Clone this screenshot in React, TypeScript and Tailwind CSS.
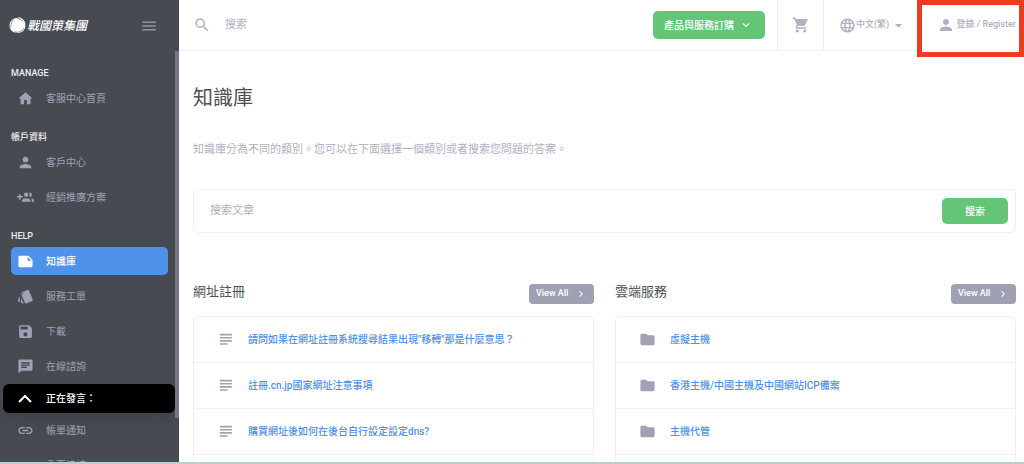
import { FC, ReactNode } from 'react'
import { IconType } from 'react-icons'
import {
  MdArrowDropDown,
  MdChat,
  MdFolder,
  MdHome,
  MdKeyboardArrowDown,
  MdKeyboardArrowRight,
  MdLanguage,
  MdLink,
  MdMenu,
  MdNote,
  MdPerson,
  MdSave,
  MdSearch,
  MdShoppingCart,
  MdStyle,
} from 'react-icons/md'

const GroupAddIcon: IconType = ({ className }) => (
  <svg viewBox="0 0 24 24" fill="currentColor" className={className} aria-hidden="true">
    <path d="M8 10H5V7H3v3H0v2h3v3h2v-3h3v-2zm10 1c1.66 0 2.99-1.34 2.99-3S19.66 5 18 5c-.32 0-.63.05-.91.14.57.81.9 1.79.9 2.86s-.34 2.04-.9 2.86c.28.09.59.14.91.14zm-5 0c1.66 0 2.99-1.34 2.99-3S14.66 5 13 5c-1.66 0-3 1.34-3 3s1.34 3 3 3zm6.62 2.16c.83.73 1.38 1.66 1.38 2.84v2h3v-2c0-1.54-2.37-2.49-4.38-2.84zM13 13c-2 0-6 1-6 3v2h12v-2c0-2-4-3-6-3z" />
  </svg>
)

const ArticleIcon: IconType = ({ className }) => (
  <svg viewBox="0 0 24 24" fill="currentColor" className={className} aria-hidden="true">
    <path d="M4 4h17v2.2H4zM4 8.4h17v2.2H4zM4 12.8h17V15H4zM4 17.2h11v2.2H4z" />
  </svg>
)

const Logo: FC = () => (
  <a href="#" className="flex items-center gap-px text-white">
    <svg viewBox="0 0 34 34" className="size-[17px]" aria-hidden="true">
      <path
        d="M15 2C7 3 1 9 1 17c0 9 7 15 16 15 8 0 15-5 16-14C33 9 27 2 19 2c4 2 8 4 10 9-4-5-8-7-14-9z"
        fill="currentColor"
      />
      <path
        d="M9 6c-4 4-6 8-5 14M11 30c8 2 15-1 18-7"
        fill="none"
        stroke="#474a51"
        strokeWidth="1.2"
        strokeLinecap="round"
      />
      <path d="M18 1c7 1 13 5 14 12" fill="none" stroke="currentColor" strokeWidth="1.5" />
    </svg>
    <span className="text-[12px] leading-4 font-medium italic">戰國策集團</span>
  </a>
)

type NavItemProps = { icon: IconType; label: string; active?: boolean }

const NavItem: FC<NavItemProps> = ({ icon: Icon, label, active }) => (
  <a
    href="#"
    className={`flex h-7 items-center gap-[7px] rounded-[5px] ${
      active ? 'bg-[#4f92eb] font-medium text-white' : 'text-[#a0a1b5]'
    }`}
  >
    <span className="flex w-7 justify-center">
      <Icon className="size-[17px]" />
    </span>
    {label}
  </a>
)

const NavSection: FC<{ title: string; children: ReactNode }> = ({ title, children }) => (
  <section>
    <h2 className="mb-[3px] text-[9px] leading-4 font-medium text-[#eeeef2]">{title}</h2>
    <div className="flex flex-col gap-[7px]">{children}</div>
  </section>
)

const Sidebar: FC = () => (
  <aside className="relative w-[179px] shrink-0 overflow-hidden bg-[#474a51]">
    <div className="flex h-[51px] items-center justify-between pr-[21px] pl-[9px]">
      <Logo />
      <button type="button" aria-label="Menu" className="text-[#9192a1]">
        <MdMenu className="size-[18px]" />
      </button>
    </div>
    <nav className="flex flex-col gap-[17px] px-[11px] pt-[14px] text-[10px]">
      <NavSection title="MANAGE">
        <NavItem icon={MdHome} label="客服中心首頁" />
      </NavSection>
      <NavSection title="帳戶資料">
        <NavItem icon={MdPerson} label="客戶中心" />
        <NavItem icon={GroupAddIcon} label="經銷推廣方案" />
      </NavSection>
      <NavSection title="HELP">
        <NavItem icon={MdNote} label="知識庫" active />
        <NavItem icon={MdStyle} label="服務工單" />
        <NavItem icon={MdSave} label="下載" />
        <NavItem icon={MdChat} label="在線諮詢" />
      </NavSection>
    </nav>
    <button
      type="button"
      className="mt-1 ml-[3px] flex h-[29px] w-[172px] items-center gap-[7px] rounded-[6px] bg-black pl-2 text-[10px] font-medium text-white shadow-lg"
    >
      <span className="flex w-7 justify-center">
        <svg viewBox="0 0 14 8" className="w-[14px]" fill="none" stroke="currentColor" strokeWidth="2" aria-hidden="true">
          <path d="M1 7l6-6 6 6" />
        </svg>
      </span>
      正在發言：
    </button>
    <div className="mt-[3px] flex flex-col gap-[7px] px-[11px] text-[10px]">
      <NavItem icon={MdLink} label="帳單通知" />
      <NavItem icon={MdLink} label="重要連結" />
    </div>
    <div className="absolute top-[51px] right-0 h-[367px] w-1 bg-[#737682]" />
  </aside>
)

const Header: FC = () => (
  <header className="relative flex h-[51px] items-stretch border-b border-[#efeff2] pl-[14px] text-[#afb0c0]">
    <label className="flex grow items-center gap-[14px]">
      <MdSearch className="size-[18px] shrink-0" />
      <input
        type="search"
        aria-label="搜索"
        placeholder="搜索"
        className="w-full text-[11px] outline-none placeholder:text-[#afb0c0]"
      />
    </label>
    <div className="flex items-center border-r border-[#efeff2] pr-3">
      <button
        type="button"
        className="flex h-7 w-28 items-center justify-between rounded-[5px] bg-[#64c576] pr-3 pl-[11px] text-[10px] font-medium text-white"
      >
        產品與服務訂購
        <MdKeyboardArrowDown className="size-[14px]" />
      </button>
    </div>
    <a href="#" aria-label="Cart" className="flex w-[46px] items-center justify-center border-r border-[#efeff2]">
      <MdShoppingCart className="size-[18px]" />
    </a>
    <label className="flex w-[93px] items-center pl-[15px]">
      <MdLanguage className="size-[17px] shrink-0" />
      <select aria-label="Language" className="w-[34px] appearance-none text-[9px] font-medium">
        <option>中文(繁)</option>
      </select>
      <MdArrowDropDown className="size-[17px]" />
    </label>
    <a
      href="#"
      className="flex w-[107px] items-center justify-end gap-[2px] pr-2 text-[9px] font-medium whitespace-nowrap"
    >
      <MdPerson className="size-[18px]" />
      登錄 / Register
    </a>
    <div className="pointer-events-none absolute top-0 right-0 h-[57px] w-[107px] border-[5px] border-[#ef3a24]" />
  </header>
)

type CategoryProps = { title: string; icon: IconType; links: string[] }

const Category: FC<CategoryProps> = ({ title, icon: Icon, links }) => (
  <section>
    <div className="flex items-center justify-between">
      <h2 className="pb-1 text-[13px] leading-5 text-[#4c5055]">{title}</h2>
      <a
        href="#"
        className="flex h-5 w-[65px] items-center justify-between rounded-[4px] bg-[#9fa1b3] pr-[7px] pl-[7px] text-[9px] font-medium text-white"
      >
        View All
        <MdKeyboardArrowRight className="size-3" />
      </a>
    </div>
    <ul className="mt-[10px] rounded-[5px] border border-[#f0f0f3]">
      {links.map((link) => (
        <li key={link} className="flex h-[46px] items-center gap-[14px] border-b border-[#f0f0f3] pl-[23px]">
          <Icon className="size-[17px] text-[#a0a1b5]" />
          <a href="#" className="text-[10px] font-medium text-[#4f92eb]">
            {link}
          </a>
        </li>
      ))}
      <li className="h-[46px]" />
    </ul>
  </section>
)

const articles = ['請問如果在網址註冊系統搜尋結果出現"移轉"那是什麼意思？', '註冊.cn.jp國家網址注意事項', '購買網址後如何在後台自行設定設定dns?']
const folders = ['虛擬主機', '香港主機/中國主機及中國網站ICP備案', '主機代管']

export default function App() {
  return (
    <div className="flex h-screen overflow-hidden border-b-2 border-[#b4d0d3] bg-white font-[Roboto,'Noto_Sans_CJK_TC',sans-serif]">
      <Sidebar />
      <div className="min-w-0 grow">
        <Header />
        <main className="pt-[33px] pr-2 pl-[14px]">
          <h1 className="text-[20px] leading-7 text-[#4c5055]">知識庫</h1>
          <p className="mt-7 text-[11px] leading-5 text-[#afb0c0]">
            知識庫分為不同的類別。您可以在下面選擇一個類別或者搜索您問題的答案。
          </p>
          <form className="mt-[29px] flex h-11 items-center rounded-[5px] border border-[#f0f0f3] pr-[7px] pl-4">
            <input
              type="text"
              aria-label="搜索文章"
              placeholder="搜索文章"
              className="grow text-[11px] outline-none placeholder:text-[#afb0c0]"
            />
            <button type="button" className="h-[26px] w-[66px] rounded-[5px] bg-[#64c576] text-[10px] font-medium text-white">
              搜索
            </button>
          </form>
          <div className="mt-[49px] grid grid-cols-2 gap-[21px]">
            <Category title="網址註冊" icon={ArticleIcon} links={articles} />
            <Category title="雲端服務" icon={MdFolder} links={folders} />
          </div>
        </main>
      </div>
    </div>
  )
}
